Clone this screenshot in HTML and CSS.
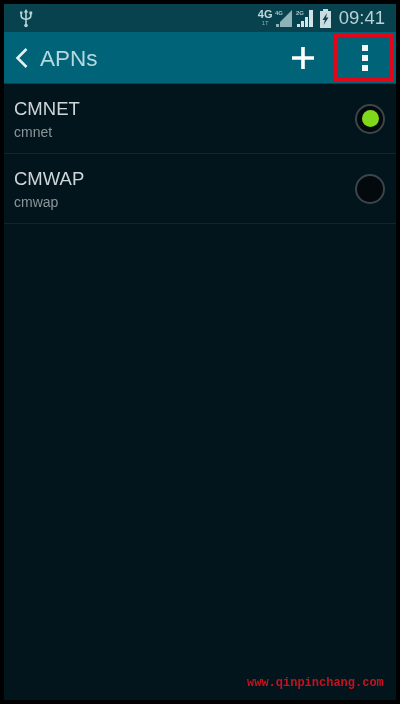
FILE: index.html
```html
<!DOCTYPE html>
<html lang="en">
<head>
<meta charset="utf-8">
<title>APNs</title>
<link rel="stylesheet" href="styles.css">
</head>
<body>
<div class="screen">
  <header class="status">
    <svg class="usb" width="14" height="20" viewBox="0 0 14 20"><path d="M7 4 V17 M2.2 6 V8 Q2.2 10.5 7 11.5 Q11.8 10.5 11.8 8 V6" fill="none" stroke="#b5d4d8" stroke-width="1.6"/><path d="M7 1 L9.2 4.5 H4.8Z" fill="#b5d4d8"/><rect x="1" y="3.5" width="2.4" height="2.4" fill="#b5d4d8"/><rect x="10.4" y="3.5" width="2.8" height="2.8" fill="#b5d4d8"/><circle cx="7" cy="17.5" r="1.8" fill="#b5d4d8"/></svg>
    <div class="status-right">
      <div class="net"><span class="net-big">4G</span><span class="net-small">1T</span></div>
      <svg class="sig" width="19" height="19" viewBox="0 0 19 19"><text x="0" y="6" class="sig-label">4G</text><path d="M1 18 h3 v-3 h-3z M5 18 V13 L17 1 V18Z" fill="#8db2b8"/></svg>
      <svg class="sig" width="19" height="19" viewBox="0 0 19 19"><text x="0" y="6" class="sig-label">2G</text><path d="M1 18 h3 v-3 h-3z M5 18 v-6 h3 v6z M9 18 v-10 h3 v10z M13 18 V1 h4 v17z" fill="#d3e4e6"/></svg>
      <svg class="batt" width="13" height="19" viewBox="0 0 13 19"><path d="M4 0 h5 v2 h3 v17 h-11 v-17 h3z" fill="#c9dcdf"/><path d="M8 4 L3.5 11 H6 L4.5 16 L9.5 8.5 H7Z" fill="#123e47"/></svg>
      <span class="time">09:41</span>
    </div>
  </header>
  <nav class="bar">
    <svg class="back" width="14" height="20" viewBox="0 0 14 20"><path d="M11.5 1 L2.5 10 L11.5 19" fill="none" stroke="#e4f0f2" stroke-width="2.6"/></svg>
    <span class="title">APNs</span>
    <svg class="plus" width="24" height="24" viewBox="0 0 24 24"><path d="M12 1 V23 M1 12 H23" stroke="#fff" stroke-width="3.6"/></svg>
    <div class="more"><i></i><i></i><i></i></div>
    <div class="highlight"></div>
  </nav>
  <main class="list">
    <div class="row">
      <div class="text"><div class="name">CMNET</div><div class="sub">cmnet</div></div>
      <div class="radio on"></div>
    </div>
    <div class="row">
      <div class="text"><div class="name">CMWAP</div><div class="sub">cmwap</div></div>
      <div class="radio"></div>
    </div>
  </main>
  <div class="mark">www.qinpinchang.com</div>
</div>
</body>
</html>
```
FILE: styles.css
```css
* { box-sizing: border-box; }
html, body { margin: 0; height: 100%; background: #000; }
.screen {
  position: relative;
  width: 400px;
  height: 704px;
  padding: 4px;
  display: flex;
  flex-direction: column;
  background: #000;
  font-family: "Liberation Sans", Roboto, sans-serif;
  overflow: hidden;
  filter: blur(0.4px);
}
.status {
  height: 28px;
  background: #07424e;
  display: flex;
  align-items: center;
  justify-content: space-between;
  padding: 0 11px 0 15px;
  flex: none;
}
.status-right { display: flex; align-items: center; gap: 2px; }
.net { display: flex; flex-direction: column; align-items: center; width: 16px; color: #c3d9dc; }
.net-big { font-size: 11px; font-weight: 700; line-height: 11px; }
.net-small { font-size: 6px; line-height: 7px; color: #88aab0; }
.sig-label { font: 700 6px "Liberation Sans", sans-serif; fill: #a9c6ca; }
.batt { margin: 0 5px 0 1.5px; }
.time { font-size: 18.5px; color: #b9d2d6; line-height: 20px; }
.bar {
  position: relative;
  height: 52px;
  flex: none;
  display: flex;
  align-items: center;
  background: #006377;
  border-bottom: 1px solid #014453;
  padding-left: 11px;
}
.back { flex: none; }
.title { margin: 3px 0 0 11px; font-size: 22.5px; color: #b5d8de; flex: 1; }
.plus { margin: 1px 47px 0 0; flex: none; }
.more { width: 6px; margin: 1px 28px 0 0; display: flex; flex-direction: column; gap: 4px; flex: none; }
.more i { display: block; width: 6px; height: 6px; background: #f2f7f8; }
.highlight {
  position: absolute;
  left: 330px;
  top: 1px;
  width: 60px;
  height: 49px;
  border: 4px solid #e1061a;
}
.list { flex: 1; background: #02151d; }
.row {
  height: 70px;
  display: flex;
  align-items: center;
  justify-content: space-between;
  padding: 0 11px 0 10px;
  border-bottom: 1px solid #13262d;
}
.text { display: flex; flex-direction: column; gap: 4px; margin-top: 0; }
.name { font-size: 18.5px; line-height: 22px; color: #cfd6d8; }
.sub { font-size: 14px; line-height: 16px; color: #8b9599; }
.radio {
  width: 30px;
  height: 30px;
  border-radius: 50%;
  border: 2px solid #3c4549;
  background: #03090d;
  display: flex;
  align-items: center;
  justify-content: center;
}
.radio.on::after {
  content: "";
  width: 17px;
  height: 17px;
  border-radius: 50%;
  background: #7fd91a;
}
.mark {
  position: absolute;
  left: 247px;
  top: 676px;
  font-family: "Liberation Mono", monospace;
  font-size: 12px;
  line-height: 14px;
  font-weight: 700;
  color: #c8101f;
}
```
